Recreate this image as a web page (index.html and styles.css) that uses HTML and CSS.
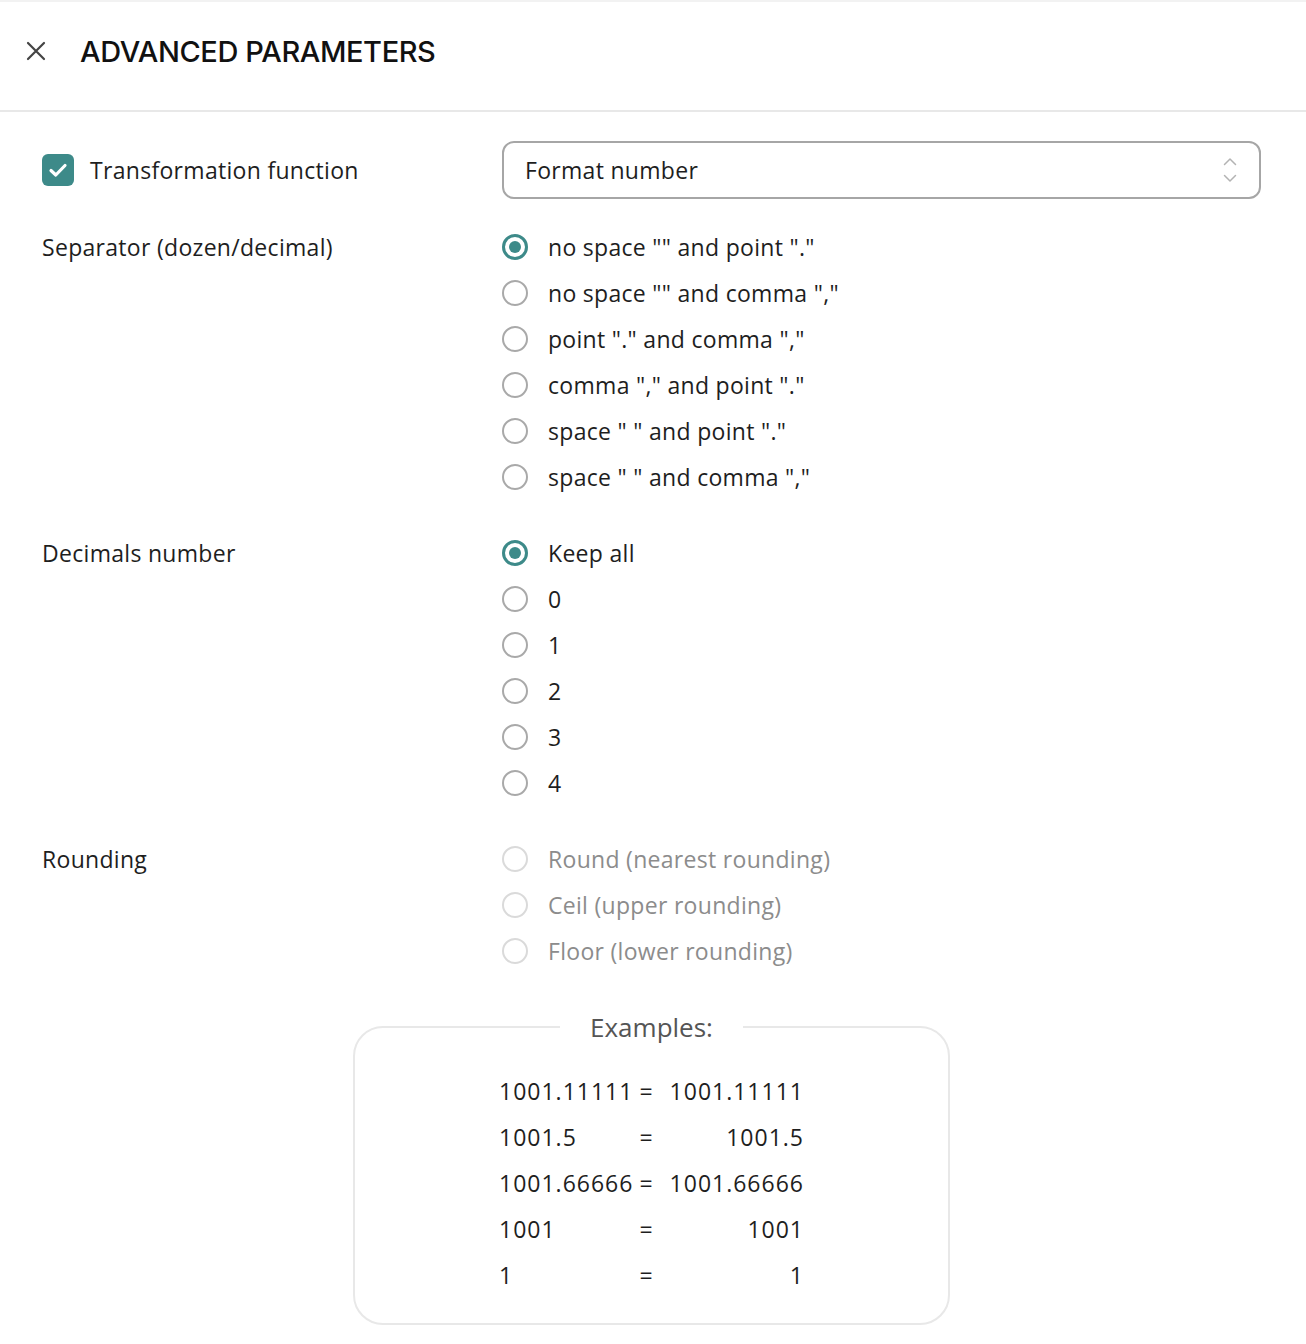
FILE: index.html
```html
<!DOCTYPE html>
<html lang="en">
  <head>
    <meta charset="UTF-8" />
    <meta name="viewport" content="width=device-width, initial-scale=1.0" />
    <title>Advanced parameters</title>
    <link rel="stylesheet" href="styles.css">
  </head>
  <body>
    <aside class="panel">
      <!-- [1] Panel header -->
      <header class="panel-header">
        <button class="close" type="button" aria-label="Close">
          <svg width="20" height="20" viewBox="0 0 20 20" aria-hidden="true">
            <path d="M2 2 L18 18 M18 2 L2 18" stroke="currentColor" stroke-width="2.2" stroke-linecap="round" fill="none" />
          </svg>
        </button>
        <h1>ADVANCED PARAMETERS</h1>
      </header>

      <!-- [2] Panel body -->
      <form class="panel-body">
        <div class="field-row">
          <label class="checkbox">
            <input type="checkbox" checked />
            <span class="checkbox-box">
              <svg width="22" height="22" viewBox="0 0 22 22" aria-hidden="true">
                <path d="M4 11.5 L8.8 16 L18 6.5" stroke="#fff" stroke-width="3.2" stroke-linecap="round" stroke-linejoin="round" fill="none" />
              </svg>
            </span>
            <span>Transformation function</span>
          </label>

          <div class="select">
            <span>Format number</span>
            <svg width="14" height="26" viewBox="0 0 14 26" aria-hidden="true">
              <path d="M1.5 7.5 L7 2 L12.5 7.5 M1.5 18.5 L7 24 L12.5 18.5" stroke="#b3b3b3" stroke-width="1.5" stroke-linecap="round" stroke-linejoin="round" fill="none" />
            </svg>
          </div>
        </div>

        <div class="field-row">
          <span class="field-label">Separator (dozen/decimal)</span>
          <div class="radio-group">
            <label class="radio"><input type="radio" name="sep" checked /><span class="dot"></span>no space "" and point "."</label>
            <label class="radio"><input type="radio" name="sep" /><span class="dot"></span>no space "" and comma ","</label>
            <label class="radio"><input type="radio" name="sep" /><span class="dot"></span>point "." and comma ","</label>
            <label class="radio"><input type="radio" name="sep" /><span class="dot"></span>comma "," and point "."</label>
            <label class="radio"><input type="radio" name="sep" /><span class="dot"></span>space " " and point "."</label>
            <label class="radio"><input type="radio" name="sep" /><span class="dot"></span>space " " and comma ","</label>
          </div>
        </div>

        <div class="field-row">
          <span class="field-label">Decimals number</span>
          <div class="radio-group">
            <label class="radio"><input type="radio" name="dec" checked /><span class="dot"></span>Keep all</label>
            <label class="radio"><input type="radio" name="dec" /><span class="dot"></span>0</label>
            <label class="radio"><input type="radio" name="dec" /><span class="dot"></span>1</label>
            <label class="radio"><input type="radio" name="dec" /><span class="dot"></span>2</label>
            <label class="radio"><input type="radio" name="dec" /><span class="dot"></span>3</label>
            <label class="radio"><input type="radio" name="dec" /><span class="dot"></span>4</label>
          </div>
        </div>

        <div class="field-row">
          <span class="field-label">Rounding</span>
          <div class="radio-group">
            <label class="radio disabled"><input type="radio" name="round" disabled /><span class="dot"></span>Round (nearest rounding)</label>
            <label class="radio disabled"><input type="radio" name="round" disabled /><span class="dot"></span>Ceil (upper rounding)</label>
            <label class="radio disabled"><input type="radio" name="round" disabled /><span class="dot"></span>Floor (lower rounding)</label>
          </div>
        </div>

        <!-- [3] Live examples -->
        <fieldset class="examples">
          <legend>Examples:</legend>
          <table>
            <tr><td>1001.11111</td><td class="eq">=</td><td class="out">1001.11111</td></tr>
            <tr><td>1001.5</td><td class="eq">=</td><td class="out">1001.5</td></tr>
            <tr><td>1001.66666</td><td class="eq">=</td><td class="out">1001.66666</td></tr>
            <tr><td>1001</td><td class="eq">=</td><td class="out">1001</td></tr>
            <tr><td>1</td><td class="eq">=</td><td class="out">1</td></tr>
          </table>
        </fieldset>
      </form>
    </aside>
  </body>
</html>
```

FILE: styles.css
```css
/*
  Global styles
*/

* {
  margin: 0;
  padding: 0;
  box-sizing: border-box;
}
:root {
  --teal: #3d8a89;
  --ink: #1e1e1e;
  --muted: #8c8c8c;
  --line: #e8e8e8;
}
body {
  background-color: #fff;
  color: var(--ink);
  font-family: "Open Sans", "Noto Sans", sans-serif;
  font-size: 23px;
  letter-spacing: 0.3px;
}

/*
  Panel
*/

.panel {
  border-top: 2px solid #f2f2f2;
}

/* [1] Header */
.panel-header {
  height: 110px;
  display: flex;
  align-items: center;
  gap: 34px;
  padding: 0 0 10px 26px;
  border-bottom: 2px solid var(--line);
}
.close {
  border: 0;
  background: none;
  color: #444;
  display: grid;
  place-items: center;
}
.panel-header h1 {
  font-family: Inter, sans-serif;
  font-size: 29px;
  font-weight: 500;
  letter-spacing: -0.4px;
  color: #111;
}

/* [2] Body */
.panel-body {
  display: flex;
  flex-direction: column;
  gap: 30px;
  padding: 29px 45px 0 42px;
}
.field-row {
  display: grid;
  grid-template-columns: 460px 1fr;
  align-items: start;
}
.field-row:first-child {
  align-items: center;
  margin-bottom: -5px;
}
.field-label {
  height: 46px;
  display: flex;
  align-items: center;
}

.checkbox {
  display: flex;
  align-items: center;
  gap: 16px;
}
.checkbox input,
.radio input {
  display: none;
}
.checkbox-box {
  width: 32px;
  height: 32px;
  border-radius: 6px;
  background-color: var(--teal);
  display: grid;
  place-items: center;
}

.select {
  height: 58px;
  display: flex;
  align-items: center;
  justify-content: space-between;
  padding: 0 22px 0 21px;
  border: 2px solid #a6a6a6;
  border-radius: 12px;
}

.radio-group {
  display: flex;
  flex-direction: column;
}
.radio {
  height: 46px;
  display: flex;
  align-items: center;
  gap: 20px;
}
.radio .dot {
  width: 26px;
  height: 26px;
  flex: none;
  border-radius: 50%;
  border: 2px solid #a9a9a9;
  display: grid;
  place-items: center;
}
.radio input:checked + .dot {
  border: 3px solid var(--teal);
}
.radio input:checked + .dot::after {
  content: "";
  width: 12px;
  height: 12px;
  border-radius: 50%;
  background-color: var(--teal);
}
.radio.disabled {
  color: var(--muted);
}
.radio.disabled .dot {
  border-color: #dadada;
}

/* [3] Examples */
.examples {
  width: 597px;
  margin: 8px auto 0;
  padding: 26px 0 25px;
  border: 2px solid var(--line);
  border-radius: 30px;
}
.examples legend {
  margin: 0 auto;
  padding: 0 30px;
  font-size: 26px;
  line-height: 30px;
  letter-spacing: 0;
  color: #555;
}
.examples table {
  margin: 0 auto;
  border-collapse: collapse;
  letter-spacing: 1px;
}
.examples td {
  height: 46px;
  padding: 0;
}
.examples .eq {
  padding: 0 16px 0 6px;
}
.examples .out {
  text-align: right;
}
```
